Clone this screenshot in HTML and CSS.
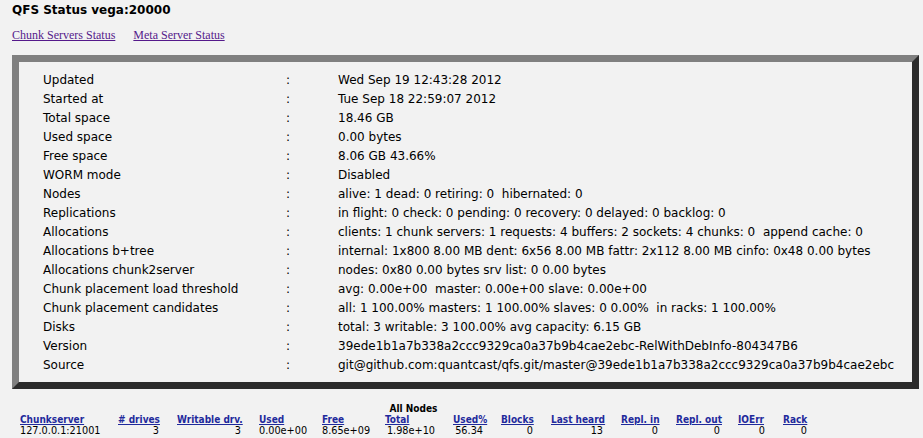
FILE: index.html
```html
<!DOCTYPE html>
<html>
<head>
<meta charset="utf-8">
<title>QFS Status vega:20000</title>
<link rel="stylesheet" href="styles.css">
</head>
<body>
<h1 class="title">QFS Status vega:20000</h1>
<nav class="links">
  <a href="#" class="link">Chunk Servers Status</a>
  <a href="#" class="link">Meta Server Status</a>
</nav>
<div class="panel">
  <div class="info">
    <div class="k">Updated</div><div class="c">:</div><div class="v">Wed Sep 19 12:43:28 2012</div>
    <div class="k">Started at</div><div class="c">:</div><div class="v">Tue Sep 18 22:59:07 2012</div>
    <div class="k">Total space</div><div class="c">:</div><div class="v">18.46 GB</div>
    <div class="k">Used space</div><div class="c">:</div><div class="v">0.00 bytes</div>
    <div class="k">Free space</div><div class="c">:</div><div class="v">8.06 GB 43.66%</div>
    <div class="k">WORM mode</div><div class="c">:</div><div class="v">Disabled</div>
    <div class="k">Nodes</div><div class="c">:</div><div class="v">alive: 1 dead: 0 retiring: 0 &nbsp;hibernated: 0</div>
    <div class="k">Replications</div><div class="c">:</div><div class="v">in flight: 0 check: 0 pending: 0 recovery: 0 delayed: 0 backlog: 0</div>
    <div class="k">Allocations</div><div class="c">:</div><div class="v">clients: 1 chunk servers: 1 requests: 4 buffers: 2 sockets: 4 chunks: 0 &nbsp;append cache: 0</div>
    <div class="k">Allocations b+tree</div><div class="c">:</div><div class="v">internal: 1x800 8.00 MB dent: 6x56 8.00 MB fattr: 2x112 8.00 MB cinfo: 0x48 0.00 bytes</div>
    <div class="k">Allocations chunk2server</div><div class="c">:</div><div class="v">nodes: 0x80 0.00 bytes srv list: 0 0.00 bytes</div>
    <div class="k">Chunk placement load threshold</div><div class="c">:</div><div class="v">avg: 0.00e+00 &nbsp;master: 0.00e+00 slave: 0.00e+00</div>
    <div class="k">Chunk placement candidates</div><div class="c">:</div><div class="v">all: 1 100.00% masters: 1 100.00% slaves: 0 0.00% &nbsp;in racks: 1 100.00%</div>
    <div class="k">Disks</div><div class="c">:</div><div class="v">total: 3 writable: 3 100.00% avg capacity: 6.15 GB</div>
    <div class="k">Version</div><div class="c">:</div><div class="v">39ede1b1a7b338a2ccc9329ca0a37b9b4cae2ebc-RelWithDebInfo-804347B6</div>
    <div class="k">Source</div><div class="c">:</div><div class="v">git@github.com:quantcast/qfs.git/master@39ede1b1a7b338a2ccc9329ca0a37b9b4cae2ebc</div>
  </div>
</div>
<div class="nodes">
  <div class="caption">All Nodes</div>
  <div class="grid">
    <a href="#" class="th">Chunkserver</a>
    <a href="#" class="th"># drives</a>
    <a href="#" class="th">Writable drv.</a>
    <a href="#" class="th">Used</a>
    <a href="#" class="th">Free</a>
    <a href="#" class="th">Total</a>
    <a href="#" class="th">Used%</a>
    <a href="#" class="th">Blocks</a>
    <a href="#" class="th">Last heard</a>
    <a href="#" class="th">Repl. in</a>
    <a href="#" class="th">Repl. out</a>
    <a href="#" class="th">IOErr</a>
    <a href="#" class="th">Rack</a>
    <div class="td left">127.0.0.1:21001</div>
    <div class="td">3</div>
    <div class="td">3</div>
    <div class="td">0.00e+00</div>
    <div class="td">8.65e+09</div>
    <div class="td">1.98e+10</div>
    <div class="td">56.34</div>
    <div class="td">0</div>
    <div class="td">13</div>
    <div class="td">0</div>
    <div class="td">0</div>
    <div class="td">0</div>
    <div class="td">0</div>
  </div>
</div>
</body>
</html>
```

FILE: styles.css
```css
html, body {
  background: #f2f2f2;
}
body {
  margin: 0;
  padding: 3px 4px 0 12px;
  color: #000;
  font-family: "DejaVu Sans", Verdana, sans-serif;
}
.title {
  margin: 0;
  font-size: 12px;
  line-height: 14px;
  font-weight: bold;
}
.links {
  margin-top: 11px;
  display: flex;
  gap: 18px;
  font-family: "Liberation Serif", "Times New Roman", serif;
  font-size: 12px;
  line-height: 14px;
}
.link {
  color: #551a8b;
  text-decoration: underline;
}
.panel {
  margin-top: 13px;
  width: 907px;
  box-sizing: border-box;
  border-style: solid;
  border-width: 7px;
  border-color: #808080 #2b2b2b #2b2b2b #808080;
  background: #f2f2f2;
  padding: 9px 0 7px 24px;
}
.info {
  display: grid;
  grid-template-columns: 243px 52px 1fr;
  font-size: 12px;
  line-height: 19px;
  white-space: nowrap;
}
.nodes {
  margin: 14px 0 0 8px;
  width: 787px;
}
.caption {
  text-align: center;
  font-family: "DejaVu Sans Condensed", "DejaVu Sans", sans-serif;
  font-weight: bold;
  font-size: 10px;
  line-height: 11px;
}
.grid {
  display: grid;
  grid-template-columns: 80px 41px 64px 45px 45px 50px 30px 32px 52px 37px 44px 27px 24px;
  column-gap: 18px;
  font-size: 10px;
  line-height: 11px;
  white-space: nowrap;
}
.th {
  font-family: "DejaVu Sans Condensed", "DejaVu Sans", sans-serif;
  font-weight: bold;
  color: #1f2a9c;
  text-decoration: underline;
  text-align: left;
}
.td {
  font-family: "DejaVu Sans Condensed", "DejaVu Sans", sans-serif;
  font-size: 10.8px;
  text-align: right;
}
.td.left {
  text-align: left;
}
```
